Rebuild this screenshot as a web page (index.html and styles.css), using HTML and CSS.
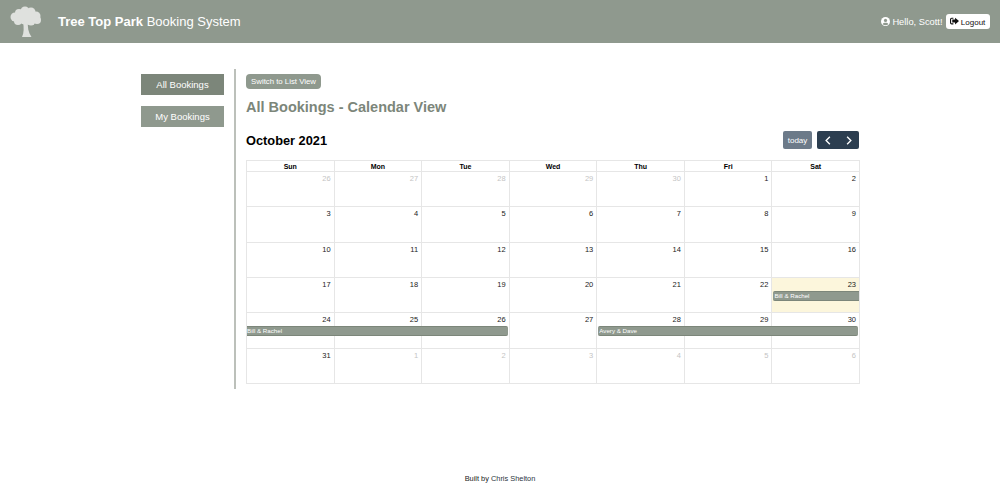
FILE: index.html
```html
<!DOCTYPE html>
<html lang="en">
<head>
  <meta charset="UTF-8">
  <meta name="viewport" content="width=device-width, initial-scale=1.0">
  <title>Tree Top Park Booking System</title>
  <link rel="stylesheet" href="styles.css">
</head>
<body>

<header class="topbar">
  <svg class="logo" viewBox="0 0 32 32" width="32" height="32" aria-hidden="true">
    <g fill="#dfe1de">
      <circle cx="15" cy="5" r="4.500"/>
      <circle cx="9" cy="7" r="4"/>
      <circle cx="21" cy="6" r="4.500"/>
      <circle cx="5" cy="11" r="4.500"/>
      <circle cx="26" cy="10" r="4.500"/>
      <circle cx="27" cy="14" r="4"/>
      <circle cx="15" cy="11" r="7.500"/>
      <circle cx="8" cy="15" r="4"/>
      <circle cx="21" cy="15" r="4.500"/>
      <path d="M13 16 H18 C17.500 21 18 26 21.500 31 H12 C14 27 14 21 13 16 Z"/>
    </g>
  </svg>
  <h1 class="brand"><b>Tree Top Park</b> Booking System</h1>
  <div class="user">
    <svg class="user-icon" viewBox="0 0 16 16" width="9" height="9" aria-hidden="true">
      <circle cx="8" cy="8" r="8" fill="#fff"/>
      <circle cx="8" cy="6" r="2.800" fill="#8f998e"/>
      <path fill="#8f998e" d="M3 13 C4 9.500 12 9.500 13 13 C11 15 5 15 3 13 Z"/>
    </svg>
    <span class="hello">Hello, Scott!</span>
    <button class="logout">
      <svg viewBox="0 0 16 14" width="9" height="8" aria-hidden="true">
        <path fill="#111" d="M6 1 H3 Q0 1 0 4 V10 Q0 13 3 13 H6 V11 H3 Q2 11 2 10 V4 Q2 3 3 3 H6 Z"/>
        <path fill="#111" d="M9 1 L16 7 L9 13 V9.500 H4 V4.500 H9 Z"/>
      </svg>
      Logout
    </button>
  </div>
</header>

<div class="page">
  <nav class="sidebar">
    <a class="side-btn active" href="#">All Bookings</a>
    <a class="side-btn" href="#">My Bookings</a>
  </nav>

  <main class="content">
    <button class="switch-btn">Switch to List View</button>
    <h2 class="page-title">All Bookings - Calendar View</h2>

    <div class="cal-toolbar">
      <h3 class="cal-title">October 2021</h3>
      <div class="cal-buttons">
        <button class="today-btn">today</button>
        <div class="nav-btns">
          <button class="nav-btn">
            <svg viewBox="0 0 8 12" width="6" height="9" aria-hidden="true"><path d="M6.500 1 L1.500 6 L6.500 11" fill="none" stroke="#fff" stroke-width="1.800"/></svg>
          </button>
          <button class="nav-btn">
            <svg viewBox="0 0 8 12" width="6" height="9" aria-hidden="true"><path d="M1.500 1 L6.500 6 L1.500 11" fill="none" stroke="#fff" stroke-width="1.800"/></svg>
          </button>
        </div>
      </div>
    </div>

    <div class="calendar">
      <div class="cal-head">
        <div>Sun</div><div>Mon</div><div>Tue</div><div>Wed</div><div>Thu</div><div>Fri</div><div>Sat</div>
      </div>

      <div class="week">
        <div class="day other">26</div><div class="day other">27</div><div class="day other">28</div><div class="day other">29</div><div class="day other">30</div><div class="day">1</div><div class="day">2</div>
      </div>
      <div class="week">
        <div class="day">3</div><div class="day">4</div><div class="day">5</div><div class="day">6</div><div class="day">7</div><div class="day">8</div><div class="day">9</div>
      </div>
      <div class="week">
        <div class="day">10</div><div class="day">11</div><div class="day">12</div><div class="day">13</div><div class="day">14</div><div class="day">15</div><div class="day">16</div>
      </div>
      <div class="week">
        <div class="day">17</div><div class="day">18</div><div class="day">19</div><div class="day">20</div><div class="day">21</div><div class="day">22</div><div class="day today">23</div>
        <div class="event event-start sat">Bill &amp; Rachel</div>
      </div>
      <div class="week">
        <div class="day">24</div><div class="day">25</div><div class="day">26</div><div class="day">27</div><div class="day">28</div><div class="day">29</div><div class="day">30</div>
        <div class="event event-end sun-tue">Bill &amp; Rachel</div>
        <div class="event event-start event-end thu-sat">Avery &amp; Dave</div>
      </div>
      <div class="week">
        <div class="day">31</div><div class="day other">1</div><div class="day other">2</div><div class="day other">3</div><div class="day other">4</div><div class="day other">5</div><div class="day other">6</div>
      </div>
    </div>
  </main>
</div>

<footer class="footer">Built by <a href="#">Chris Shelton</a></footer>

</body>
</html>
```

FILE: styles.css
```css
body {
  font-family: "Liberation Sans", Arial, sans-serif;
  background-color: #fff;
  color: #212529;
  margin: 0;
  padding: 0;
  min-height: 100vh;
  display: flex;
  flex-direction: column;
  box-sizing: border-box;
}

button {
  font-family: inherit;
  cursor: pointer;
}

.topbar {
  display: flex;
  align-items: center;
  height: 43px;
  background-color: #8f998e;
  padding: 0 10.500px 0 10px;
  box-sizing: border-box;
  color: #fff;
}

.logo {
  margin-right: 16px;
  flex: none;
}

.brand {
  margin: 0;
  font-size: 13px;
  font-weight: normal;
}

.user {
  margin-left: auto;
  display: flex;
  align-items: center;
  font-size: 9.300px;
}

.user-icon {
  margin-right: 2px;
}

.logout {
  margin-left: 3px;
  height: 15px;
  width: 44px;
  padding: 0;
  border: none;
  border-radius: 3px;
  background-color: #fff;
  color: #111;
  font-size: 8px;
}

.page {
  display: flex;
  margin: 26px 0 0 141px;
  width: 718px;
}

.sidebar {
  width: 83px;
  padding-top: 5px;
  padding-right: 10px;
  border-right: 2px solid #bcc0ba;
  display: flex;
  flex-direction: column;
  gap: 11px;
  flex: none;
}

.side-btn {
  display: block;
  height: 21px;
  line-height: 21px;
  text-align: center;
  font-size: 9.500px;
  color: #fff;
  background-color: #8f998e;
  text-decoration: none;
}

.side-btn.active {
  background-color: #7c867a;
}

.content {
  flex: 1;
  padding: 5px 0 5px 10px;
}

.switch-btn {
  display: block;
  height: 15px;
  width: 75px;
  padding: 0;
  border: none;
  border-radius: 4px;
  background-color: #8f998e;
  color: #fff;
  font-size: 7.800px;
}

.page-title {
  margin: 10px 0 0;
  font-size: 14.500px;
  line-height: 17px;
  color: #7c867a;
}

.cal-toolbar {
  display: flex;
  align-items: center;
  justify-content: space-between;
  margin-top: 15px;
  height: 18px;
}

.cal-title {
  margin: 0;
  font-size: 12.800px;
  color: #000;
}

.cal-buttons {
  display: flex;
  gap: 5px;
}

.today-btn {
  width: 29px;
  height: 18px;
  padding: 0;
  border: none;
  border-radius: 2px;
  background-color: #6c7a89;
  color: #fff;
  font-size: 8px;
}

.nav-btns {
  display: flex;
  background-color: #2c3e50;
  border-radius: 2px;
}

.nav-btn {
  width: 21px;
  height: 18px;
  padding: 0;
  border: none;
  background: none;
  display: flex;
  align-items: center;
  justify-content: center;
}

.calendar {
  margin: 11px -1px 0 0;
  border-top: 1px solid #e6e6e6;
  border-left: 1px solid #e6e6e6;
}

.cal-head {
  display: grid;
  grid-template-columns: repeat(7, 1fr);
}

.cal-head div {
  height: 10px;
  line-height: 11px;
  text-align: center;
  font-size: 7px;
  font-weight: bold;
  color: #000;
  border-right: 1px solid #e6e6e6;
  border-bottom: 1px solid #e6e6e6;
}

.week {
  display: grid;
  grid-template-columns: repeat(7, 1fr);
  grid-template-rows: 13px 10px 1fr;
  height: 35.330px;
}

.day {
  grid-row: 1 / span 3;
  padding: 2px 3px 0 0;
  text-align: right;
  font-size: 7.500px;
  line-height: 10px;
  color: #222;
  border-right: 1px solid #e6e6e6;
  border-bottom: 1px solid #e6e6e6;
}

.day:nth-child(1) { grid-column: 1; }
.day:nth-child(2) { grid-column: 2; }
.day:nth-child(3) { grid-column: 3; }
.day:nth-child(4) { grid-column: 4; }
.day:nth-child(5) { grid-column: 5; }
.day:nth-child(6) { grid-column: 6; }
.day:nth-child(7) { grid-column: 7; }

.day.other {
  color: #c4c4c4;
}

.day.today {
  background-color: #fcf6dc;
}

.event {
  grid-row: 2;
  z-index: 1;
  height: 10px;
  line-height: 8.500px;
  padding-left: 1px;
  font-size: 6.200px;
  color: #fff;
  background-color: #8f998e;
  box-sizing: border-box;
  border-top: 1px solid #7c867a;
  border-bottom: 1px solid #7c867a;
  overflow: hidden;
  white-space: nowrap;
}

.event-start {
  margin-left: 1px;
  border-top-left-radius: 2px;
  border-bottom-left-radius: 2px;
}

.event-end {
  margin-right: 2px;
  border-top-right-radius: 2px;
  border-bottom-right-radius: 2px;
}

.sun-tue {
  padding-left: 0;
}

.sat { grid-column: 7; margin-right: 1px; }
.sun-tue { grid-column: 1 / span 3; }
.thu-sat { grid-column: 5 / span 3; }

.footer {
  margin-top: auto;
  padding-bottom: 3px;
  text-align: center;
  font-size: 7.400px;
  line-height: 10px;
  color: #222;
}

.footer a {
  color: #2a3440;
  text-decoration: none;
}
```
